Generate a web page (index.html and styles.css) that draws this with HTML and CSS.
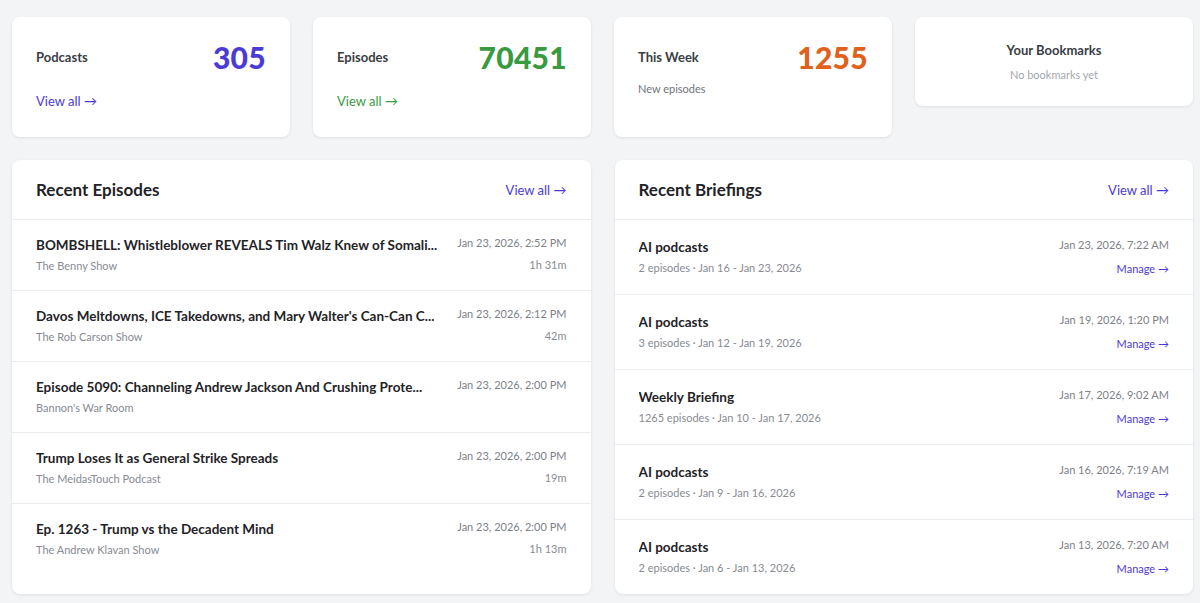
FILE: index.html
```html
<!DOCTYPE html>
<html lang="en">
<head>
  <meta charset="UTF-8" />
  <meta name="viewport" content="width=device-width, initial-scale=1.0" />
  <title>Dashboard</title>
  <link rel="stylesheet" href="styles.css">
</head>
<body>
  <div class="stats">
    <div class="card stat">
      <div class="stat-top">
        <span class="stat-label">Podcasts</span>
        <span class="stat-num purple">305</span>
      </div>
      <a href="#" class="stat-link purple">View all →</a>
    </div>
    <div class="card stat">
      <div class="stat-top">
        <span class="stat-label">Episodes</span>
        <span class="stat-num green">70451</span>
      </div>
      <a href="#" class="stat-link green">View all →</a>
    </div>
    <div class="card stat">
      <div class="stat-top">
        <span class="stat-label">This Week</span>
        <span class="stat-num orange">1255</span>
      </div>
      <span class="stat-note">New episodes</span>
    </div>
    <div class="card bookmarks">
      <div class="bm-title">Your Bookmarks</div>
      <div class="bm-empty">No bookmarks yet</div>
    </div>
  </div>

  <div class="panels">
    <div class="card panel">
      <div class="panel-head">
        <h2>Recent Episodes</h2>
        <a href="#" class="link">View all →</a>
      </div>
      <div class="row ep">
        <div class="main">
          <div class="title">BOMBSHELL: Whistleblower REVEALS Tim Walz Knew of Somali...</div>
          <div class="sub">The Benny Show</div>
        </div>
        <div class="side">
          <div class="date">Jan 23, 2026, 2:52 PM</div>
          <div class="dur">1h 31m</div>
        </div>
      </div>
      <div class="row ep">
        <div class="main">
          <div class="title">Davos Meltdowns, ICE Takedowns, and Mary Walter's Can-Can C...</div>
          <div class="sub">The Rob Carson Show</div>
        </div>
        <div class="side">
          <div class="date">Jan 23, 2026, 2:12 PM</div>
          <div class="dur">42m</div>
        </div>
      </div>
      <div class="row ep">
        <div class="main">
          <div class="title">Episode 5090: Channeling Andrew Jackson And Crushing Prote...</div>
          <div class="sub">Bannon's War Room</div>
        </div>
        <div class="side">
          <div class="date">Jan 23, 2026, 2:00 PM</div>
          <div class="dur"></div>
        </div>
      </div>
      <div class="row ep">
        <div class="main">
          <div class="title">Trump Loses It as General Strike Spreads</div>
          <div class="sub">The MeidasTouch Podcast</div>
        </div>
        <div class="side">
          <div class="date">Jan 23, 2026, 2:00 PM</div>
          <div class="dur">19m</div>
        </div>
      </div>
      <div class="row ep last">
        <div class="main">
          <div class="title">Ep. 1263 - Trump vs the Decadent Mind</div>
          <div class="sub">The Andrew Klavan Show</div>
        </div>
        <div class="side">
          <div class="date">Jan 23, 2026, 2:00 PM</div>
          <div class="dur">1h 13m</div>
        </div>
      </div>
    </div>

    <div class="card panel">
      <div class="panel-head">
        <h2>Recent Briefings</h2>
        <a href="#" class="link">View all →</a>
      </div>
      <div class="row brief">
        <div class="main">
          <div class="title">AI podcasts</div>
          <div class="sub">2 episodes · Jan 16 - Jan 23, 2026</div>
        </div>
        <div class="side">
          <div class="date">Jan 23, 2026, 7:22 AM</div>
          <a href="#" class="manage">Manage →</a>
        </div>
      </div>
      <div class="row brief">
        <div class="main">
          <div class="title">AI podcasts</div>
          <div class="sub">3 episodes · Jan 12 - Jan 19, 2026</div>
        </div>
        <div class="side">
          <div class="date">Jan 19, 2026, 1:20 PM</div>
          <a href="#" class="manage">Manage →</a>
        </div>
      </div>
      <div class="row brief">
        <div class="main">
          <div class="title">Weekly Briefing</div>
          <div class="sub">1265 episodes · Jan 10 - Jan 17, 2026</div>
        </div>
        <div class="side">
          <div class="date">Jan 17, 2026, 9:02 AM</div>
          <a href="#" class="manage">Manage →</a>
        </div>
      </div>
      <div class="row brief">
        <div class="main">
          <div class="title">AI podcasts</div>
          <div class="sub">2 episodes · Jan 9 - Jan 16, 2026</div>
        </div>
        <div class="side">
          <div class="date">Jan 16, 2026, 7:19 AM</div>
          <a href="#" class="manage">Manage →</a>
        </div>
      </div>
      <div class="row brief last">
        <div class="main">
          <div class="title">AI podcasts</div>
          <div class="sub">2 episodes · Jan 6 - Jan 13, 2026</div>
        </div>
        <div class="side">
          <div class="date">Jan 13, 2026, 7:20 AM</div>
          <a href="#" class="manage">Manage →</a>
        </div>
      </div>
    </div>
  </div>
</body>
</html>
```

FILE: styles.css
```css
body { margin: 0; padding: 17px 7px 10px 12px; background: #f3f4f6; font-family: Lato, "Noto Sans", sans-serif; color: #1f2328; }
a { text-decoration: none; }

.card { background: #fff; border-radius: 8px; box-shadow: 0 1px 3px rgba(0, 0, 0, 0.09); }

.purple { color: #4b3bd6; }
.green { color: #3a9a3f; }
.orange { color: #e0601c; }

.stats { display: grid; grid-template-columns: repeat(4, 1fr); gap: 23px; align-items: start; margin-bottom: 23px; }
.stat { padding: 22px 24px 24px; height: 120px; box-sizing: border-box; }
.stat-top { display: flex; justify-content: space-between; align-items: center; height: 36px; }
.stat-label { font-size: 13px; font-weight: 700; color: #3a3d44; }
.stat-num { font-size: 30px; font-weight: 900; letter-spacing: 0.3px; }
.stat-link { display: block; margin-top: 16px; font-size: 13px; line-height: 20px; }
.stat-note { display: block; margin-top: 7px; font-size: 11px; color: #70747c; }

.bookmarks { padding: 24px; text-align: center; height: 89px; box-sizing: border-box; }
.bm-title { font-size: 13px; font-weight: 700; color: #3a3d44; line-height: 18px; }
.bm-empty { margin-top: 8px; font-size: 11px; color: #a4a8ae; line-height: 16px; }

.panels { display: grid; grid-template-columns: 1fr 1fr; gap: 24px; }
.panel { overflow: hidden; }
.panel-head { display: flex; justify-content: space-between; align-items: center; height: 59px; padding: 0 24px; border-bottom: 1px solid #ececee; }
.panel-head h2 { margin: 0; font-size: 17px; font-weight: 700; }
.link { font-size: 13px; color: #4b3bd6; }

.row { display: flex; justify-content: space-between; padding: 15px 24px 16px; border-bottom: 1px solid #ececee; }
.row.last { border-bottom: none; }
.row.brief { padding: 17px 24px 17px; }
.main { min-width: 0; }
.title { font-size: 13.5px; font-weight: 700; line-height: 20px; white-space: nowrap; overflow: hidden; text-overflow: ellipsis; }
.sub { margin-top: 2px; font-size: 11px; line-height: 17px; color: #878b93; }
.side { flex-shrink: 0; text-align: right; padding-left: 14px; }
.date { font-size: 11px; line-height: 16px; color: #7d8189; }
.dur { margin-top: 6px; font-size: 11px; line-height: 16px; color: #878b93; min-height: 16px; }
.manage { display: block; margin-top: 8px; font-size: 11px; line-height: 16px; color: #4b3bd6; }
```
